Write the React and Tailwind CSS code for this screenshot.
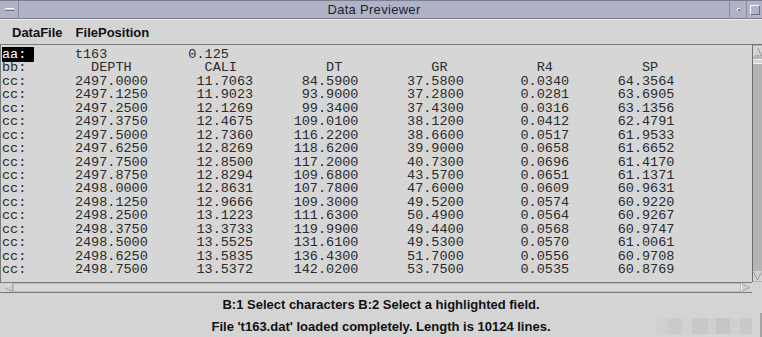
import React from 'react';

const rows = [
  ['2497.0000', '11.7063', '84.5900', '37.5800', '0.0340', '64.3564'],
  ['2497.1250', '11.9023', '93.9000', '37.2800', '0.0281', '63.6905'],
  ['2497.2500', '12.1269', '99.3400', '37.4300', '0.0316', '63.1356'],
  ['2497.3750', '12.4675', '109.0100', '38.1200', '0.0412', '62.4791'],
  ['2497.5000', '12.7360', '116.2200', '38.6600', '0.0517', '61.9533'],
  ['2497.6250', '12.8269', '118.6200', '39.9000', '0.0658', '61.6652'],
  ['2497.7500', '12.8500', '117.2000', '40.7300', '0.0696', '61.4170'],
  ['2497.8750', '12.8294', '109.6800', '43.5700', '0.0651', '61.1371'],
  ['2498.0000', '12.8631', '107.7800', '47.6000', '0.0609', '60.9631'],
  ['2498.1250', '12.9666', '109.3000', '49.5200', '0.0574', '60.9220'],
  ['2498.2500', '13.1223', '111.6300', '50.4900', '0.0564', '60.9267'],
  ['2498.3750', '13.3733', '119.9900', '49.4400', '0.0568', '60.9747'],
  ['2498.5000', '13.5525', '131.6100', '49.5300', '0.0570', '61.0061'],
  ['2498.6250', '13.5835', '136.4300', '51.7000', '0.0556', '60.9708'],
  ['2498.7500', '13.5372', '142.0200', '53.7500', '0.0535', '60.8769'],
];

const headers = ['DEPTH', 'CALI', 'DT', 'GR', 'R4', 'SP'];

const headerLine = 'bb:  ' + headers.map((h) => h.padStart(11) + '  ').join('');

function TitleBar() {
  return (
    <div className="flex h-[19px] bg-[#b0b3c7] border-t border-[#7c7e8c]">
      <div className="flex w-[19px] items-center justify-center border-r border-[#8a8c9c] border-b border-b-[#7c7e8c]">
        <div className="h-[3px] w-[9px] bg-[#c8cad8] border-t border-white border-b border-b-[#6e7080]" />
      </div>
      <div className="flex flex-1 items-center justify-center border-b border-[#7c7e8c] text-[13px] tracking-[0.3px] text-[#1e1e24] font-['Liberation_Sans',sans-serif]">
        Data Previewer
      </div>
      <div className="flex w-[17px] items-center justify-center border-l border-[#8a8c9c] border-b border-b-[#7c7e8c]">
        <div className="h-[3px] w-[3px] bg-[#6e7080] border-t border-l border-white" />
      </div>
      <div className="flex w-[16px] items-center justify-center border-l border-[#8a8c9c] border-b border-b-[#7c7e8c]">
        <div className="h-[10px] w-[10px] border border-t-white border-l-white border-b-[#6e7080] border-r-[#6e7080]" />
      </div>
    </div>
  );
}

function MenuBar() {
  return (
    <div className="flex h-[25px] items-center gap-[13px] pl-[12px] pt-[2px] bg-[#d4d4d4] border-t border-[#ececec] text-[13px] font-bold text-[#111] font-['Liberation_Sans',sans-serif]">
      <span>DataFile</span>
      <span>FilePosition</span>
    </div>
  );
}

function VScroll() {
  return (
    <div className="flex w-[10px] flex-col bg-[#b4b4b4] border-t border-l border-[#6e6e6e]">
      <svg width="9" height="11" viewBox="0 0 9 11" className="mt-[1px]">
        <rect width="9" height="11" fill="#d4d4d4" />
        <polygon points="4.5,1 8.5,10 0.5,10" fill="#cfcfcf" stroke="#888" strokeWidth="0.8" />
        <line x1="4.5" y1="1" x2="0.5" y2="10" stroke="#fff" strokeWidth="0.8" />
      </svg>
      <div className="mt-[2px] h-[5px] bg-[#d4d4d4] border-y border-[#f0f0f0]" />
      <div className="flex-1" />
      <svg width="9" height="10" viewBox="0 0 9 10" className="mb-[1px]">
        <rect width="9" height="10" fill="#d4d4d4" />
        <polygon points="0.5,1 8.5,1 4.5,9" fill="#cfcfcf" stroke="#888" strokeWidth="0.8" />
        <line x1="0.5" y1="1" x2="8.5" y2="1" stroke="#fff" strokeWidth="0.8" />
      </svg>
    </div>
  );
}

function HScroll() {
  return (
    <div className="flex h-[11px]">
      <div className="flex flex-1 items-center bg-[#d4d4d4] border-y border-[#7a7a7a] pl-[3px] pr-[1px]">
        <svg width="10" height="9" viewBox="0 0 10 9">
          <polygon points="1,4.5 9.5,0.5 9.5,8.5" fill="#cfcfcf" stroke="#999" strokeWidth="0.8" />
          <line x1="1" y1="4.5" x2="9.5" y2="0.5" stroke="#fff" strokeWidth="0.8" />
        </svg>
        <div className="flex-1 h-[9px] border border-[#bdbdbd] bg-[#d8d8d8]" />
        <svg width="10" height="9" viewBox="0 0 10 9">
          <polygon points="9,4.5 0.5,0.5 0.5,8.5" fill="#cfcfcf" stroke="#999" strokeWidth="0.8" />
          <line x1="0.5" y1="0.5" x2="0.5" y2="8.5" stroke="#fff" strokeWidth="0.8" />
        </svg>
      </div>
      <div className="w-[10px] bg-[#d4d4d4]" />
    </div>
  );
}

export default function App() {
  return (
    <div className="flex h-[337px] w-[762px] flex-col overflow-hidden bg-[#d4d4d4]">
      <TitleBar />
      <MenuBar />
      <div className="flex h-[238px]">
        <div className="flex-1 overflow-hidden bg-[#d6d6d6] border-t border-l border-[#7a7a7a] pt-[3px] pl-[1px] whitespace-pre text-[13.5px] leading-[13.44px] text-[#2a2a2a] font-['Liberation_Mono',monospace]">
          <div>
            <span className="bg-black text-white">aa: </span>
            {'     t163          0.125'}
          </div>
          <div>{headerLine}</div>
          {rows.map((r, i) => (
            <div key={i}>{'cc:  ' + r.map((v) => v.padStart(13)).join('')}</div>
          ))}
        </div>
        <VScroll />
      </div>
      <HScroll />
      <div className="relative flex flex-1 flex-col items-center pt-[4px] gap-[6px] text-[13px] font-bold text-[#111] font-['Liberation_Sans',sans-serif]">
        <div className="leading-[16px]">B:1 Select characters B:2 Select a highlighted field.</div>
        <div className="leading-[16px]">File 't163.dat' loaded completely. Length is 10124 lines.</div>
        <div className="absolute right-[10px] top-[25px] flex h-[16px]">
          <div className="w-[12px] bg-[#d0d0d0]" />
          <div className="w-[14px] bg-[#cbcbcb]" />
          <div className="w-[10px] bg-[#d2d2d2]" />
          <div className="w-[16px] bg-[#c8c8c8]" />
          <div className="w-[8px] bg-[#cfcfcf]" />
          <div className="w-[14px] bg-[#c6c6c6]" />
          <div className="w-[10px] bg-[#d0d0d0]" />
          <div className="w-[12px] bg-[#c9c9c9]" />
        </div>
        <div className="absolute right-0 top-[20px] h-[24px] w-[2px] bg-[#a4a4a4]" />
      </div>
    </div>
  );
}
